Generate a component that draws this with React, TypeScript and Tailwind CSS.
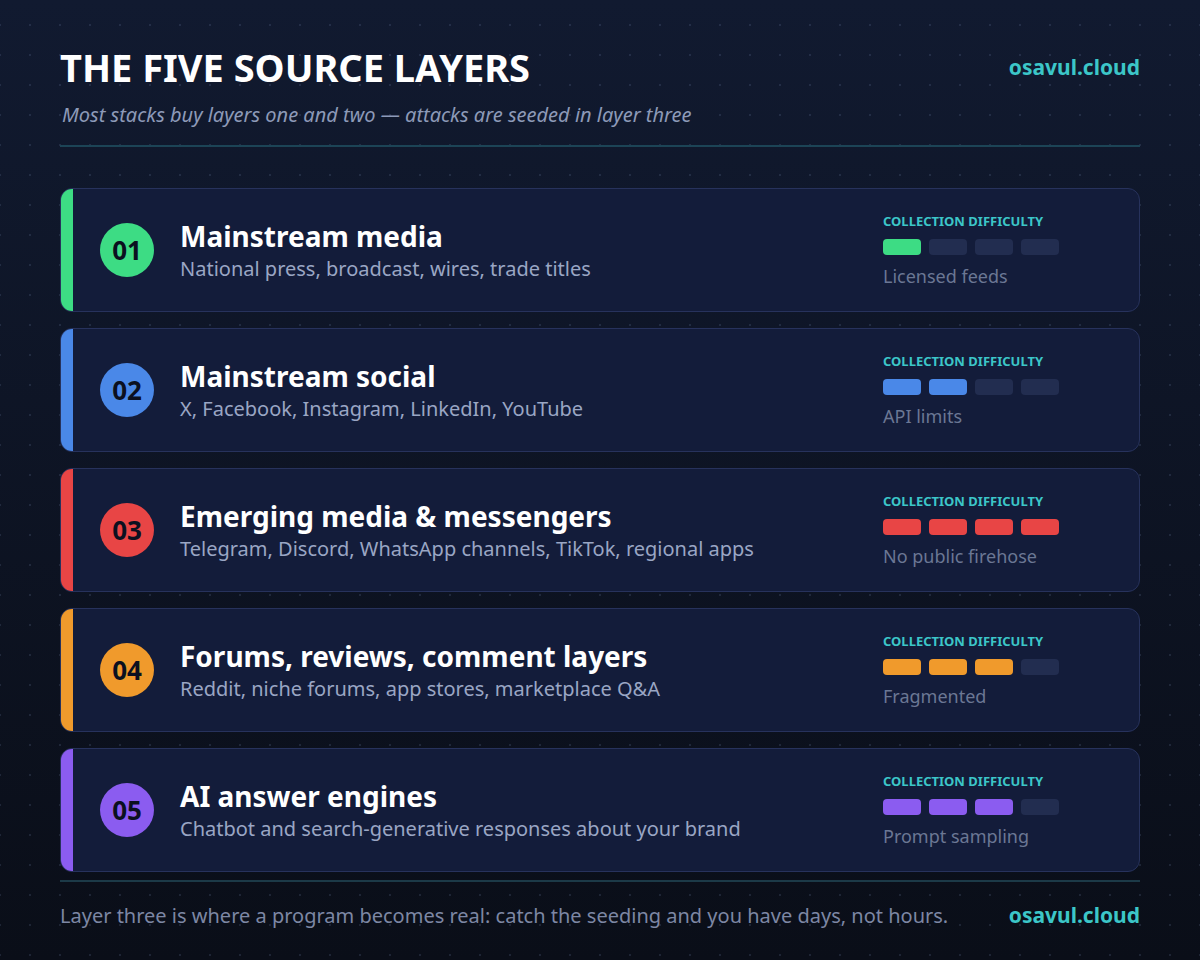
const layers = [
  { n: "01", t: "Mainstream media", s: "National press, broadcast, wires, trade titles", c: "#3ddc84", lvl: 1, d: "Licensed feeds" },
  { n: "02", t: "Mainstream social", s: "X, Facebook, Instagram, LinkedIn, YouTube", c: "#4a88e8", lvl: 2, d: "API limits" },
  { n: "03", t: "Emerging media & messengers", s: "Telegram, Discord, WhatsApp channels, TikTok, regional apps", c: "#e84545", lvl: 4, d: "No public firehose" },
  { n: "04", t: "Forums, reviews, comment layers", s: "Reddit, niche forums, app stores, marketplace Q&A", c: "#f09a2c", lvl: 3, d: "Fragmented" },
  { n: "05", t: "AI answer engines", s: "Chatbot and search-generative responses about your brand", c: "#8b5cf0", lvl: 3, d: "Prompt sampling" },
];

export default function App() {
  return (
    <div
      className="w-[1200px] h-[960px] overflow-hidden px-[60px] pt-[44px] font-['Liberation_Sans',Arial,sans-serif]"
      style={{
        backgroundImage:
          "radial-gradient(circle, rgba(120,140,180,0.18) 1px, transparent 1.3px), linear-gradient(to bottom, #111a30, #0a0e18)",
        backgroundSize: "30px 30px, 100% 100%",
        backgroundPosition: "15px 10px, 0 0",
      }}
    >
      <div className="flex justify-between items-start">
        <h1 className="text-[38px] leading-[46px] font-bold text-white">THE FIVE SOURCE LAYERS</h1>
        <div className="text-[21px] font-bold text-[#3cc6c8] mt-[8px]">osavul.cloud</div>
      </div>
      <p className="italic text-[20px] text-[#8d9ab8] mt-[10px] ml-[2px]">
        Most stacks buy layers one and two — attacks are seeded in layer three
      </p>
      <div className="h-[2px] bg-[#1c4456] mt-[15px]" />
      <div className="flex flex-col gap-[16px] mt-[41px]">
        {layers.map((l) => (
          <div key={l.n} className="flex h-[124px] rounded-xl overflow-hidden border border-[#27325c] bg-[#131c3a]">
            <div className="w-[12px] shrink-0" style={{ background: l.c }} />
            <div className="flex-1 flex items-center pl-[27px] pr-[80px]">
              <div
                className="w-[54px] h-[54px] rounded-full flex items-center justify-center text-[26px] font-bold text-[#0b1020] shrink-0"
                style={{ background: l.c }}
              >
                {l.n}
              </div>
              <div className="ml-[26px] flex-1">
                <div className="text-[28px] leading-[34px] font-bold text-white">{l.t}</div>
                <div className="text-[20px] leading-[26px] text-[#9aa6c4] mt-[3px]">{l.s}</div>
              </div>
              <div className="w[176px] w-[176px]">
                <div className="text-[13px] font-bold text-[#3cc6c8] leading-[16px]">COLLECTION DIFFICULTY</div>
                <div className="flex gap-[8px] mt-[10px]">
                  {[0, 1, 2, 3].map((i) => (
                    <div
                      key={i}
                      className="w-[38px] h-[16px] rounded-[4px]"
                      style={{ background: i < l.lvl ? l.c : "#222d50" }}
                    />
                  ))}
                </div>
                <div className="text-[18px] text-[#6b7794] mt-[10px] leading-[22px]">{l.d}</div>
              </div>
            </div>
          </div>
        ))}
      </div>
      <div className="h-[2px] bg-[#1c3a48] mt-[8px]" />
      <div className="flex justify-between items-center mt-[18px]">
        <div className="text-[20px] text-[#7d87a4]">
          Layer three is where a program becomes real: catch the seeding and you have days, not hours.
        </div>
        <div className="text-[21px] font-bold text-[#3cc6c8]">osavul.cloud</div>
      </div>
    </div>
  );
}
